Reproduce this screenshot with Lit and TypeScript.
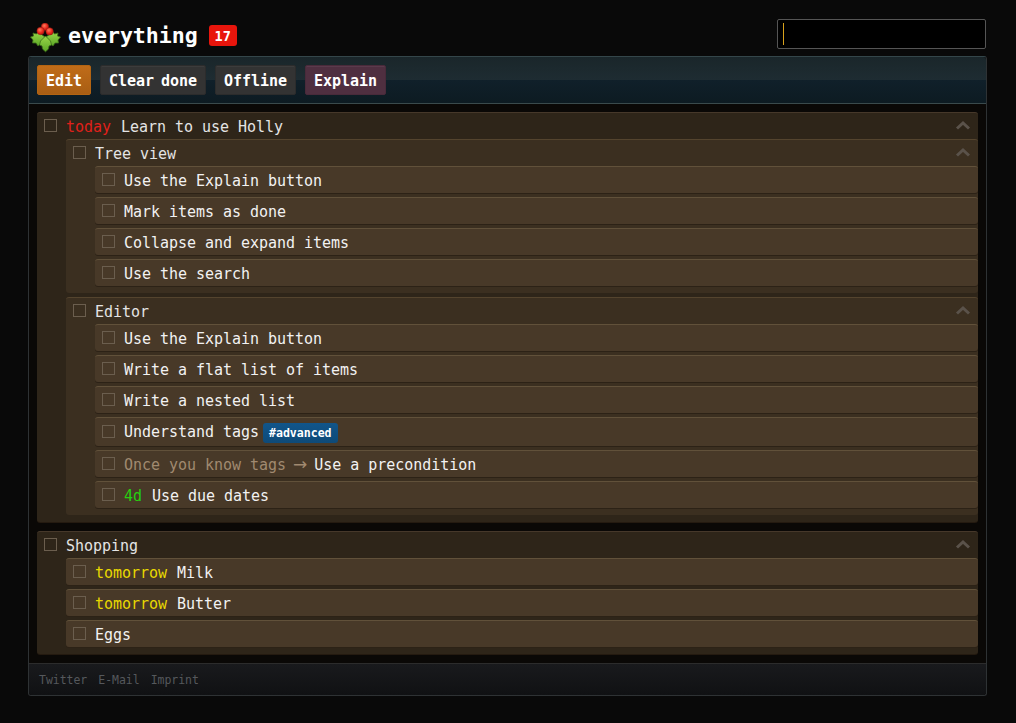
import { LitElement, html, css, svg } from "lit";
import { customElement } from "lit/decorators.js";

type Node = { t: any; kids?: Node[]; tall?: boolean };

const tree: Node[] = [
  {
    t: html`<span class="today">today</span> Learn to use Holly`,
    kids: [
      {
        t: "Tree view",
        kids: [
          { t: "Use the Explain button" },
          { t: "Mark items as done" },
          { t: "Collapse and expand items" },
          { t: "Use the search" },
        ],
      },
      {
        t: "Editor",
        kids: [
          { t: "Use the Explain button" },
          { t: "Write a flat list of items" },
          { t: "Write a nested list" },
          { t: html`Understand tags <span class="tag">#advanced</span>`, tall: true },
          { t: html`<span class="pre">Once you know tags<span class="arrow">→</span></span>Use a precondition` },
          { t: html`<span class="due">4d</span> Use due dates` },
        ],
      },
    ],
  },
  {
    t: "Shopping",
    kids: [
      { t: html`<span class="tom">tomorrow</span> Milk` },
      { t: html`<span class="tom">tomorrow</span> Butter` },
      { t: "Eggs" },
    ],
  },
];

const holly = svg`
  <defs>
    <linearGradient id="lf" x1="0" y1="0" x2="0" y2="1">
      <stop offset="0" stop-color="#9ad648"/><stop offset="1" stop-color="#5ba526"/>
    </linearGradient>
    <radialGradient id="bry" cx="0.4" cy="0.35" r="0.7">
      <stop offset="0" stop-color="#ff7a5a"/><stop offset="0.6" stop-color="#e8261c"/><stop offset="1" stop-color="#b01410"/>
    </radialGradient>
  </defs>
  <g fill="url(#lf)" stroke="#3a6c18" stroke-width="0.8" stroke-linejoin="round">
    <path d="M15 14 L8 9 L6.5 11 L3 10 L3.5 13 L0.5 14 L3 17 L2.5 20 L6 20 L8 23 L15 17 Z"/>
    <path d="M16 14 L23 9 L24.5 11 L28 10 L27.5 13 L30.5 14 L28 17 L28.5 20 L25 20 L23 23 L16 17 Z"/>
    <path d="M15.5 13 L10.5 18 L9.5 22 L12 23 L12.5 26 L15.5 28.8 L18.5 26 L19 23 L21.5 22 L20.5 18 Z"/>
  </g>
  <g fill="url(#bry)" stroke="#8a1c12" stroke-width="0.5">
    <circle cx="15" cy="3.8" r="3.7"/>
    <circle cx="10.6" cy="8" r="3.7"/>
    <circle cx="19.6" cy="8.4" r="3.7"/>
  </g>
`;

@customElement("app-root")
export class AppRoot extends LitElement {
  static styles = css`
    :host {
      display: block;
      min-height: 723px;
      background: #090909;
      font-family: "DejaVu Sans Mono", monospace;
      letter-spacing: -0.03px;
      color: #eee;
      box-sizing: border-box;
      padding-left: 28px;
    }
    .shell { width: 959px; }
    .top {
      height: 56px;
      display: flex;
      align-items: flex-start;
      padding: 0 1px 0 2px;
      box-sizing: border-box;
    }
    .logo { width: 32px; height: 30px; margin-top: 23px; flex: none; }
    h1 {
      margin: 24px 0 0 6px;
      font-size: 21.6px;
      font-weight: 700;
      color: #fff;
      line-height: 24px;
    }
    .badge {
      margin-left: 11px;
      width: 28px;
      height: 21px;
      margin-top: 25px;
      background: #e8150c;
      border-radius: 3px;
      color: #fff;
      font-weight: 700;
      font-size: 13.5px;
      display: flex;
      align-items: center;
      justify-content: center;
    }
    .search {
      margin-left: auto;
      position: relative;
      width: 209px;
      height: 30px;
      margin-top: 19px;
      box-sizing: border-box;
      background: #000;
      border: 1px solid #555;
      border-radius: 2px;
    }
    .caret {
      position: absolute;
      left: 5px;
      top: 3px;
      width: 1px;
      height: 22px;
      background: #d8a21c;
    }
    .app {
      border: 1px solid #2e3234;
      border-top-color: #34464a;
      border-radius: 3px;
      background: #0a0806;
    }
    .bar {
      height: 47px;
      box-sizing: border-box;
      border-bottom: 1px solid #3a4a4c;
      background: linear-gradient(#1a262a 0, #1e2c32 49%, #10202a 50%, #0d1b22 100%);
      padding: 8px;
      display: flex;
      gap: 9px;
      align-items: flex-start;
      border-radius: 3px 3px 0 0;
    }
    .btn {
      height: 30px;
      box-sizing: border-box;
      padding: 1px 8px 0;
      display: flex;
      align-items: center;
      font-size: 15px;
      font-weight: 700;
      color: #fff;
      border-radius: 2px;
      background: #333;
      word-spacing: -2px;
      border: 1px solid #2c2c2c;
      box-shadow: inset 0 1px 0 #3c3c3c;
    }
    .btn.edit { background: linear-gradient(#c06c18, #a85e14); border-color: #b36412; box-shadow: none; }
    .btn.explain { background: #4f2f40; border-color: #492a3a; box-shadow: inset 0 1px 0 #5a3a4c; }
    .list {
      padding: 8px 8px 9px 8px;
      display: flex;
      flex-direction: column;
      gap: 9px;
    }
    .item { border-radius: 3px; border-top: 1px solid transparent; }
    .l1 { background: #2e2519; border-top-color: #46382a; box-shadow: 0 1px 0 #241a10; }
    .l2 { background: #3b2f20; border-top-color: #54442e; }
    .leaf { background: #483928; border-top-color: #61513a; box-shadow: 0 1px 0 #2c2216; }
    .row {
      display: flex;
      align-items: center;
      height: 26px;
      padding-left: 7px;
      font-size: 15px;
      white-space: pre;
      color: #e4e4e4;
      position: relative;
    }
    .leaf > .row { color: #f2f2f2; }
    .tall > .row { height: 28px; }
    .box {
      width: 13px;
      height: 13px;
      box-sizing: border-box;
      border: 1px solid #6b5e4e;
      margin-right: 9px;
      flex: none;
      margin-top: -1px;
    }
    .txt { position: relative; top: 1px; }
    .chev {
      position: absolute;
      right: 7px;
      top: 7px;
      width: 16px;
      height: 10px;
      fill: none;
      stroke: #5a524a;
      stroke-width: 3;
    }
    .kids {
      margin-left: 29px;
      display: flex;
      flex-direction: column;
      gap: 4px;
      padding-bottom: 7px;
    }
    .today { color: #e0201a; margin-right: 1px; }
    .tom { color: #e8d800; margin-right: 1px; }
    .due { color: #26d010; margin-right: 1px; }
    .pre { color: #a08a70; }
    .arrow {
      display: inline-block;
      margin: 0 7px;
      font-family: "DejaVu Sans", sans-serif;
      font-size: 17px;
      line-height: 1;
    }
    .tag {
      display: inline-block;
      background: linear-gradient(#11558a, #0e4a78);
      color: #fff;
      font-weight: 700;
      font-size: 11.6px;
      padding: 0 6px;
      line-height: 20px;
      border-radius: 3px;
      margin-left: -5px;
    }
    .foot {
      height: 32px;
      box-sizing: border-box;
      border-top: 1px solid #2c2c2c;
      background: linear-gradient(#191a1d, #101113);
      display: flex;
      align-items: center;
      gap: 11px;
      padding: 0 10px;
      font-size: 11.5px;
      color: #55585c;
      border-radius: 0 0 3px 3px;
    }
  `;

  private item(n: Node, level: number): unknown {
    const cls = n.kids ? (level === 1 ? "l1" : "l2") : "leaf";
    return html`<div class="item ${cls} ${n.tall ? "tall" : ""}">
      <div class="row">
        <span class="box"></span><span class="txt">${n.t}</span>
        ${n.kids
          ? html`<svg class="chev" viewBox="0 0 16 10"><path d="M2 8.5 L8 3 L14 8.5"></path></svg>`
          : ""}
      </div>
      ${n.kids
        ? html`<div class="kids">${n.kids.map((k) => this.item(k, level + 1))}</div>`
        : ""}
    </div>`;
  }

  render() {
    return html`<div class="shell">
      <div class="top">
        <svg class="logo" viewBox="0 0 32 30">${holly}</svg>
        <h1>everything</h1>
        <span class="badge">17</span>
        <div class="search"><span class="caret"></span></div>
      </div>
      <div class="app">
        <div class="bar">
          <div class="btn edit">Edit</div>
          <div class="btn">Clear done</div>
          <div class="btn">Offline</div>
          <div class="btn explain">Explain</div>
        </div>
        <div class="list">${tree.map((n) => this.item(n, 1))}</div>
        <div class="foot"><span>Twitter</span><span>E-Mail</span><span>Imprint</span></div>
      </div>
    </div>`;
  }
}
